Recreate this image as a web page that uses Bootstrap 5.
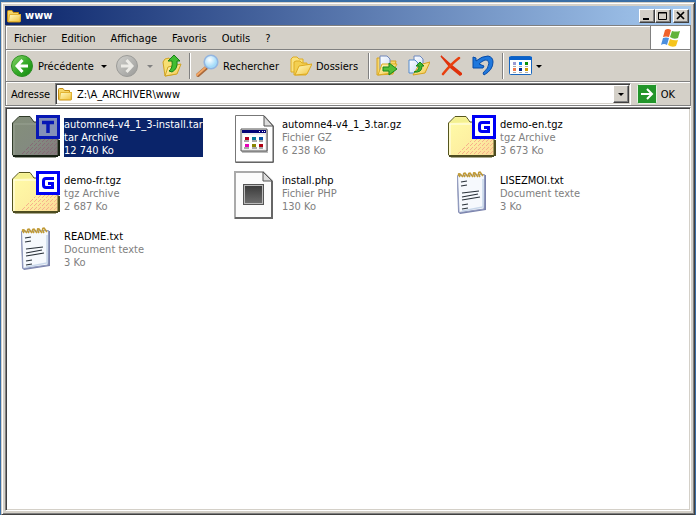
<!DOCTYPE html>
<html lang="fr">
<head>
<meta charset="utf-8">
<meta name="viewport" content="width=device-width, initial-scale=1">
<title>www</title>
<link rel="stylesheet" href="https://cdn.jsdelivr.net/npm/bootstrap@5.3.0/dist/css/bootstrap.min.css">
<style>
:root{--face:#d4d0c8;--shade:#808080;--dark:#404040}
body{background:#3a6ea5;font:11px/13px "DejaVu Sans Condensed","DejaVu Sans",sans-serif;color:#000;padding:2px 1px 0}
svg{display:block;flex:none}
button{font:inherit;color:inherit}
.window{background:var(--face);border:1px solid;border-color:var(--face) var(--dark) var(--dark) var(--face);box-shadow:inset 1px 1px #fff,inset -1px -1px var(--shade);padding:3px}
.title-bar{height:19px;background:linear-gradient(90deg,#0a246a,#a6caf0);color:#fff;font-weight:700;padding:0 2px 0 1px}
.title-bar h1{font:inherit;margin:0 0 0 3px}
.win-btn,.drop-btn{background:var(--face);border:1px solid;border-color:#fff var(--dark) var(--dark) #fff;box-shadow:inset -1px -1px var(--shade);padding:0;border-radius:0;display:flex;align-items:center;justify-content:center}
.win-btn{width:16px;height:14px}
.win-close{margin-left:2px}
.bands{border:1px solid var(--shade);border-top:0;box-shadow:0 1px #fff;margin-bottom:1px}
.band{border-top:1px solid var(--shade);box-shadow:inset 1px 1px #fff}
.menu-band{height:24px}
.menu-band nav{padding:2px 0 0 1px;gap:1px}
.menu-band button{background:none;border:0;padding:0 7px}
.throbber{width:40px;background:#fff;border-left:1px solid var(--shade)}
.tool-band{height:32px;padding:1px 4px 0}
.tool{background:none;border:0;padding:0;height:28px;display:flex;align-items:center;gap:4px}
.caret{width:0;height:0;border:3px solid transparent;border-top-color:#000;border-bottom:0}
.caret.off{border-top-color:var(--shade)}
.rule{width:2px;height:26px;border-left:1px solid var(--shade);background:#fff;flex:none}
.w-back{width:83px}.w-go{width:24px}.w-text{width:85px}.w-folders{width:72px}
.address-band{height:24px;padding:1px 15px 0 5px}
.address-band label{width:44px}
.go-btn{margin-left:6px}
.sunken{border:1px solid;border-color:var(--shade) #fff #fff var(--shade);box-shadow:inset 1px 1px var(--dark),inset -1px -1px var(--face);background:#fff;padding:1px}
.address-field{height:22px}
.address-field input{border:0;outline:0;font:inherit;padding:0;min-width:0;height:17px}
.drop-btn{width:16px;height:18px}
.files{padding:7px 6px;overflow:auto}
.file-grid{display:grid;grid-template-columns:repeat(auto-fill,218px);row-gap:8px;margin:0;padding:0;list-style:none}
.file-item{gap:4px;height:48px;white-space:nowrap}
.file-item div{margin-top:3px}
.file-item span{display:block;color:var(--shade)}
.file-item .file-name{color:#000}
.picked div{background:#0a246a}
.picked span,.picked .file-name{color:#fff}
</style>
<script src="https://cdn.jsdelivr.net/npm/bootstrap@5.3.0/dist/js/bootstrap.bundle.min.js"></script>
</head>
<body class="vh-100 d-flex flex-column">
<svg width="0" height="0" class="position-absolute" aria-hidden="true">
<defs>
<linearGradient id="gFold" x1="0" y1="0" x2="1" y2="1"><stop offset="0" stop-color="#fffbc4"/><stop offset="1" stop-color="#f2c441"/></linearGradient>
<linearGradient id="gTgz" x1="0" y1="0" x2="1" y2="1"><stop offset="0" stop-color="#fffca8"/><stop offset=".6" stop-color="#fdeea0"/><stop offset="1" stop-color="#fbd898"/></linearGradient>
<linearGradient id="gTar" x1="0" y1="0" x2="1" y2="1"><stop offset="0" stop-color="#848f7a"/><stop offset=".6" stop-color="#838a80"/><stop offset="1" stop-color="#83787c"/></linearGradient>
<linearGradient id="gGreen" x1="0" y1="0" x2="1" y2="1"><stop offset="0" stop-color="#8fd66f"/><stop offset=".5" stop-color="#36ab29"/><stop offset="1" stop-color="#12880f"/></linearGradient>
<linearGradient id="gGrey" x1="0" y1="0" x2="1" y2="1"><stop offset="0" stop-color="#d0d0cc"/><stop offset="1" stop-color="#9a9a98"/></linearGradient>
<linearGradient id="gPaper" x1="0" y1="0" x2="1" y2="1"><stop offset="0" stop-color="#fff"/><stop offset="1" stop-color="#cbdcf8"/></linearGradient>
<linearGradient id="gPhp" x1="0" y1="0" x2="0" y2="1"><stop offset="0" stop-color="#3c3c3c"/><stop offset="1" stop-color="#6c6c6c"/></linearGradient>
<radialGradient id="gLens" cx=".4" cy=".35"><stop offset="0" stop-color="#fff"/><stop offset="1" stop-color="#a4dcfa"/></radialGradient>
<pattern id="pDots" width="4" height="4" patternUnits="userSpaceOnUse"><path d="M0 0h1v1h-1zM2 2h1v1h-1zM3 1h1v1h-1z" fill="#f8b08c"/></pattern>
<pattern id="pDotsDark" width="4" height="4" patternUnits="userSpaceOnUse"><path d="M0 0h1v1h-1zM2 2h1v1h-1zM3 1h1v1h-1z" fill="#866a76"/></pattern>
<symbol id="smallFolder" viewBox="0 0 16 16"><path d="M1.500 13V3.500Q1.500 2.500 2.500 2.500H6L7.500 4.500H12.500V6.500H14.500V13Q14.500 14 13.500 14H2.500Q1.500 14 1.500 13Z" fill="#f5d566" stroke="#c58e14"/><path d="M3.500 6.500H14.500L14 13.500H2.500Z" fill="url(#gFold)" stroke="#e3b331"/></symbol>
<symbol id="tgz" viewBox="0 0 48 48"><path d="M.5 8L7 1.500H18L22 7H46V40L44 42H3L.5 40Z" fill="url(#gTgz)" stroke="#55551e"/><path d="M2 8L7 2.500H18L21 7Z" fill="#f3f090"/><path d="M2 9H25M2 9V40" stroke="#fffff0" fill="none"/><path d="M45 24V40H5Q14 34 18 28L27 24Z" fill="url(#pDots)"/><path d="M1 41H46M47 25V41" stroke="#4d4c20" stroke-width="2" fill="none"/><rect x="25.500" y="1.500" width="21" height="21" fill="#fff" stroke="#0000f5" stroke-width="3"/><path d="M42 7.500H34Q31.500 7.500 31.500 10V14Q31.500 16.500 34 16.500H40.500V12.500H36" fill="none" stroke="#0000f5" stroke-width="3"/></symbol>
<symbol id="notepad" viewBox="0 0 48 48"><path d="M9 5L38 4V39L12 43L10 41Z" fill="#7a82ac"/><path d="M9.500 4.500L36.500 3.500L36 38L11 41.500Z" fill="#f6f9fd" stroke="#8f99bd"/><path d="M35 8V36L14 40" fill="none" stroke="#c8d7ea" stroke-width="1.500"/><path d="M13 11L19 10M13 15L19 14M14 22L31 20M14 26L30 23M14 29L32 26M14 34L20 33M14 38L20 37" stroke="#283038" stroke-width="1.200"/><path d="M12 6Q9 2 12 3L15 6M17 6Q14 2 17 2L20 6M22 6Q19 2 22 2L25 6M27 6Q24 1 27 2L30 6M32 6Q29 1 32 1L35 5" fill="none" stroke="#c09a35" stroke-width="1.600"/></symbol>
</defs></svg>

<main class="window flex-grow-1 d-flex flex-column">
<header class="title-bar d-flex align-items-center">
<svg width="16" height="16"><use href="#smallFolder"/></svg>
<h1 class="flex-grow-1">www</h1>
<button class="win-btn" aria-label="Réduire"><svg width="12" height="10"><path d="M2 7h6v2H2z"/></svg></button>
<button class="win-btn" aria-label="Agrandir"><svg width="12" height="10"><path d="M1.500 1.500h8v7h-8zM1 2h9" fill="none" stroke="#000"/></svg></button>
<button class="win-btn win-close" aria-label="Fermer"><svg width="12" height="10"><path d="M2 1l7 7M9 1l-7 7" stroke="#000" stroke-width="1.700"/></svg></button>
</header>

<div class="bands">
<div class="band menu-band d-flex">
<nav class="flex-grow-1 d-flex align-items-center" aria-label="Menu">
<button>Fichier</button><button>Edition</button><button>Affichage</button><button>Favoris</button><button>Outils</button><button>?</button>
</nav>
<div class="throbber d-flex align-items-center justify-content-center">
<svg width="20" height="20" viewBox="0 0 20 20"><path d="M4 2Q7 0 10 2L8 9Q5 8 2 9Z" fill="#f0622b"/><path d="M11 3Q15 4 19 3L17 10Q13 12 9 9Z" fill="#62b33a"/><path d="M2 10Q5 9 8 10L6 17Q3 15 0 17Z" fill="#4c8fdf"/><path d="M9 11Q13 13 17 12L15 18Q11 20 7 17Z" fill="#f6c51c"/></svg>
</div>
</div>

<div class="band tool-band d-flex align-items-center" role="toolbar">
<button class="tool w-back"><svg width="24" height="24" viewBox="0 0 24 24"><circle cx="12" cy="12" r="10.500" fill="url(#gGreen)" stroke="#2c8e22"/><path d="M12.500 6L7 12L12.500 18M7 12H18" fill="none" stroke="#fff" stroke-width="3"/></svg>Précédente</button>
<button class="tool ms-2 me-2" aria-label="Historique précédent"><i class="caret"></i></button>
<button class="tool" disabled aria-label="Suivante"><svg width="24" height="24" viewBox="0 0 24 24"><circle cx="12" cy="12" r="10.500" fill="url(#gGrey)" stroke="#9b9b98"/><path d="M11.500 6L17 12L11.500 18M17 12H6" fill="none" stroke="#ecebe6" stroke-width="3"/></svg></button>
<button class="tool ms-2 me-2" disabled aria-label="Historique suivant"><i class="caret off"></i></button>
<button class="tool w-go me-1" aria-label="Dossier parent"><svg width="24" height="24" viewBox="0 0 24 24"><path d="M2 8L4 5L8 4L10 7L15 7V20L4 22Z" fill="#f7df72" stroke="#d0a323"/><path d="M4 22L7 13L20 10L16 20Z" fill="url(#gFold)" stroke="#d0a323"/><path d="M8 17Q12 14 11 7H7L13 1L19 7H16Q17 15 11 18Z" fill="#42bd31" stroke="#188318"/></svg></button>
<span class="rule"></span>
<button class="tool w-text ms-1 me-2"><svg width="24" height="24" viewBox="0 0 24 24"><path d="M11 14L3 21" stroke="#a9683a" stroke-width="4" stroke-linecap="round"/><path d="M10 14L2 21" stroke="#f3a867" stroke-width="2" stroke-linecap="round"/><circle cx="16" cy="8" r="6.800" fill="url(#gLens)" stroke="#93b5e0" stroke-width="1.600"/></svg>Rechercher</button>
<button class="tool w-folders me-2"><svg width="24" height="24" viewBox="0 0 24 24"><path d="M3 18V5L5 3H9L11 5H15V9L9 18Z" fill="#fae17c" stroke="#ddac24"/><path d="M6 21V8L8 7H12L14 9H19V11H22L18 21Z" fill="#f3cf50" stroke="#ddac24"/><path d="M7 21L11 12L24 10L19 20Z" fill="url(#gFold)" stroke="#dda91f"/></svg>Dossiers</button>
<span class="rule"></span>
<button class="tool w-go ms-1 me-2" aria-label="Déplacer vers"><svg width="24" height="24" viewBox="0 0 24 24"><path d="M3 21V4H7L9 7H22L19 20Z" fill="#f7d76a" stroke="#d6a21f"/><path d="M6 2H13L16 5V16H6Z" fill="url(#gPaper)" stroke="#7187ba"/><path d="M4 21L8 10H23L18 19Z" fill="url(#gFold)" stroke="#dbab22"/><path d="M9 13H15V9L23 15L15 21V17H9Z" fill="#54bf36" stroke="#15851c"/></svg></button>
<button class="tool w-go me-2" aria-label="Copier vers"><svg width="24" height="24" viewBox="0 0 24 24"><path d="M8 2H14L17 5V15H8Z" fill="url(#gPaper)" stroke="#6d87bd"/><path d="M3 6H9L12 9V19H3Z" fill="url(#gPaper)" stroke="#548bcd"/><path d="M7 21L13 11L24 8L19 19Z" fill="url(#gFold)" stroke="#d6a21f"/><path d="M8 18Q13 17 13 12H10L14 8L18 12H16Q16 19 8 18Z" fill="#43b52d" stroke="#15851c"/></svg></button>
<button class="tool w-go me-2" aria-label="Supprimer"><svg width="24" height="24" viewBox="0 0 24 24"><path d="M3 2L13 11L24 20L22 21L12 13Z" fill="#df310b" stroke="#df310b" stroke-width="1.500"/><path d="M21 4Q13 10 5 20" fill="none" stroke="#e8400f" stroke-width="2.600" stroke-linecap="round"/></svg></button>
<button class="tool w-go me-2" aria-label="Annuler"><svg width="24" height="24" viewBox="0 0 24 24"><path d="M3 3L6 4V7Q12 2 18 2Q23 3 23 8Q23 16 14 21L13 19Q19 14 19 9Q18 5 15 6Q12 7 9 10L14 12L13 14H3Z" fill="#1f78dd" stroke="#064aa7"/></svg></button>
<span class="rule"></span>
<button class="tool ms-1" aria-label="Affichages"><svg width="24" height="20" viewBox="0 0 24 20"><rect x="1.500" y=".5" width="22" height="18" rx="1" fill="#fff" stroke="#1866bf"/><path d="M1 1H24V4H1z" fill="#0961cb"/><path d="M5 6h3v3H5z" fill="#9b9ad2"/><path d="M11 6h3v3h-3z" fill="#087fe4"/><path d="M17 6h3v3h-3z" fill="#099109"/><path d="M5 12h3v3H5z" fill="#f4794c"/><path d="M11 12h3v3h-3z" fill="#062e91"/><path d="M17 12h3v3h-3z" fill="#d39d04"/><path d="M5 10.500h3m3 0h3m3 0h3M5 16.500h3m3 0h3m3 0h3" stroke="#aaa"/></svg><i class="caret"></i></button>
</div>

<div class="band address-band d-flex align-items-center">
<label for="address">Adresse</label>
<div class="sunken address-field flex-grow-1 d-flex align-items-center">
<svg class="me-1" width="16" height="16"><use href="#smallFolder"/></svg>
<input id="address" class="flex-grow-1" type="text" value="Z:\A_ARCHIVER\www">
<button class="drop-btn" aria-label="Adresses récentes"><i class="caret"></i></button>
</div>
<button class="tool go-btn"><svg width="20" height="20" viewBox="0 0 20 20"><rect x=".5" y=".5" width="19" height="19" rx="1" fill="#22952a" stroke="#e5f3e1"/><path d="M4 10H15M10 5L15 10L10 15" fill="none" stroke="#fff" stroke-width="2"/></svg>OK</button>
</div>
</div>

<section class="sunken files flex-grow-1" aria-label="Fichiers">
<ul class="file-grid">
<li class="file-item picked d-flex align-items-start"><svg width="48" height="48" viewBox="0 0 48 48"><path d="M.5 8L7 1.500H18L22 7H46V40L44 42H3L.5 40Z" fill="url(#gTar)" stroke="#303b29"/><path d="M2 9H25M2 9V40" stroke="#99a293" fill="none"/><path d="M45 24V40H5Q14 34 18 28L27 24Z" fill="url(#pDotsDark)"/><path d="M1 41H46M47 25V41" stroke="#162013" stroke-width="2" fill="none"/><rect x="25.500" y="1.500" width="21" height="21" fill="#8490b8" stroke="#0717b5" stroke-width="3"/><path d="M30 7.500H42M36 7.500V18" fill="none" stroke="#0717b5" stroke-width="3.500"/></svg><div><span class="file-name">automne4-v4_1_3-install.tar</span><span>tar Archive</span><span>12 740 Ko</span></div></li>
<li class="file-item d-flex align-items-start"><svg width="48" height="48" viewBox="0 0 48 48"><path d="M5.500 .5H34L43.500 11V47.500H5.500Z" fill="#fff" stroke="#777"/><path d="M34 1V11H43Z" fill="#ddd" stroke="#555"/><path d="M43 11V47H6" fill="none" stroke="#555"/><path d="M12 15H38V38H12Z" fill="#bbb"/><path d="M11 14H37V36H11Z" fill="#eee" stroke="#555"/><path d="M12 15H36V18H12Z" fill="#050578"/><path d="M29 16h1v1h-1zM32 16h1v1h-1zM34 16h1v1h-1z" fill="#fff"/><path d="M13 20h22v14H13z" fill="#fff"/><path d="M15 22h4v3h-4z" fill="#b00020"/><path d="M22 22h4v3h-4z" fill="#087b98"/><path d="M29 22h4v3h-4z" fill="#0754a5"/><path d="M15 29h4v3h-4z" fill="#e600b8"/><path d="M22 29h4v3h-4z" fill="#898500"/><path d="M29 29h4v3h-4z" fill="#b00012"/><path d="M14 26h5m3 0h5m2 0h4M14 33h5m3 0h5m2 0h4" stroke="#555"/></svg><div><span class="file-name">automne4-v4_1_3.tar.gz</span><span>Fichier GZ</span><span>6 238 Ko</span></div></li>
<li class="file-item d-flex align-items-start"><svg width="48" height="48"><use href="#tgz"/></svg><div><span class="file-name">demo-en.tgz</span><span>tgz Archive</span><span>3 673 Ko</span></div></li>
<li class="file-item d-flex align-items-start"><svg width="48" height="48"><use href="#tgz"/></svg><div><span class="file-name">demo-fr.tgz</span><span>tgz Archive</span><span>2 687 Ko</span></div></li>
<li class="file-item d-flex align-items-start"><svg width="48" height="48" viewBox="0 0 48 48"><path d="M5 1H33L42 10V47H5Z" fill="#fcfcfc" stroke="#aaa" stroke-width="2"/><path d="M33 1V10H42Z" fill="#ddd" stroke="#555"/><path d="M42 10V47H5" fill="none" stroke="#666" stroke-width="2"/><rect x="13.500" y="13.500" width="20" height="20" fill="#bbb" stroke="#555"/><path d="M15 15h17v17H15z" fill="url(#gPhp)"/></svg><div><span class="file-name">install.php</span><span>Fichier PHP</span><span>130 Ko</span></div></li>
<li class="file-item d-flex align-items-start"><svg width="48" height="48"><use href="#notepad"/></svg><div><span class="file-name">LISEZMOI.txt</span><span>Document texte</span><span>3 Ko</span></div></li>
<li class="file-item d-flex align-items-start"><svg width="48" height="48"><use href="#notepad"/></svg><div><span class="file-name">README.txt</span><span>Document texte</span><span>3 Ko</span></div></li>
</ul>
</section>
</main>
</body>
</html>
